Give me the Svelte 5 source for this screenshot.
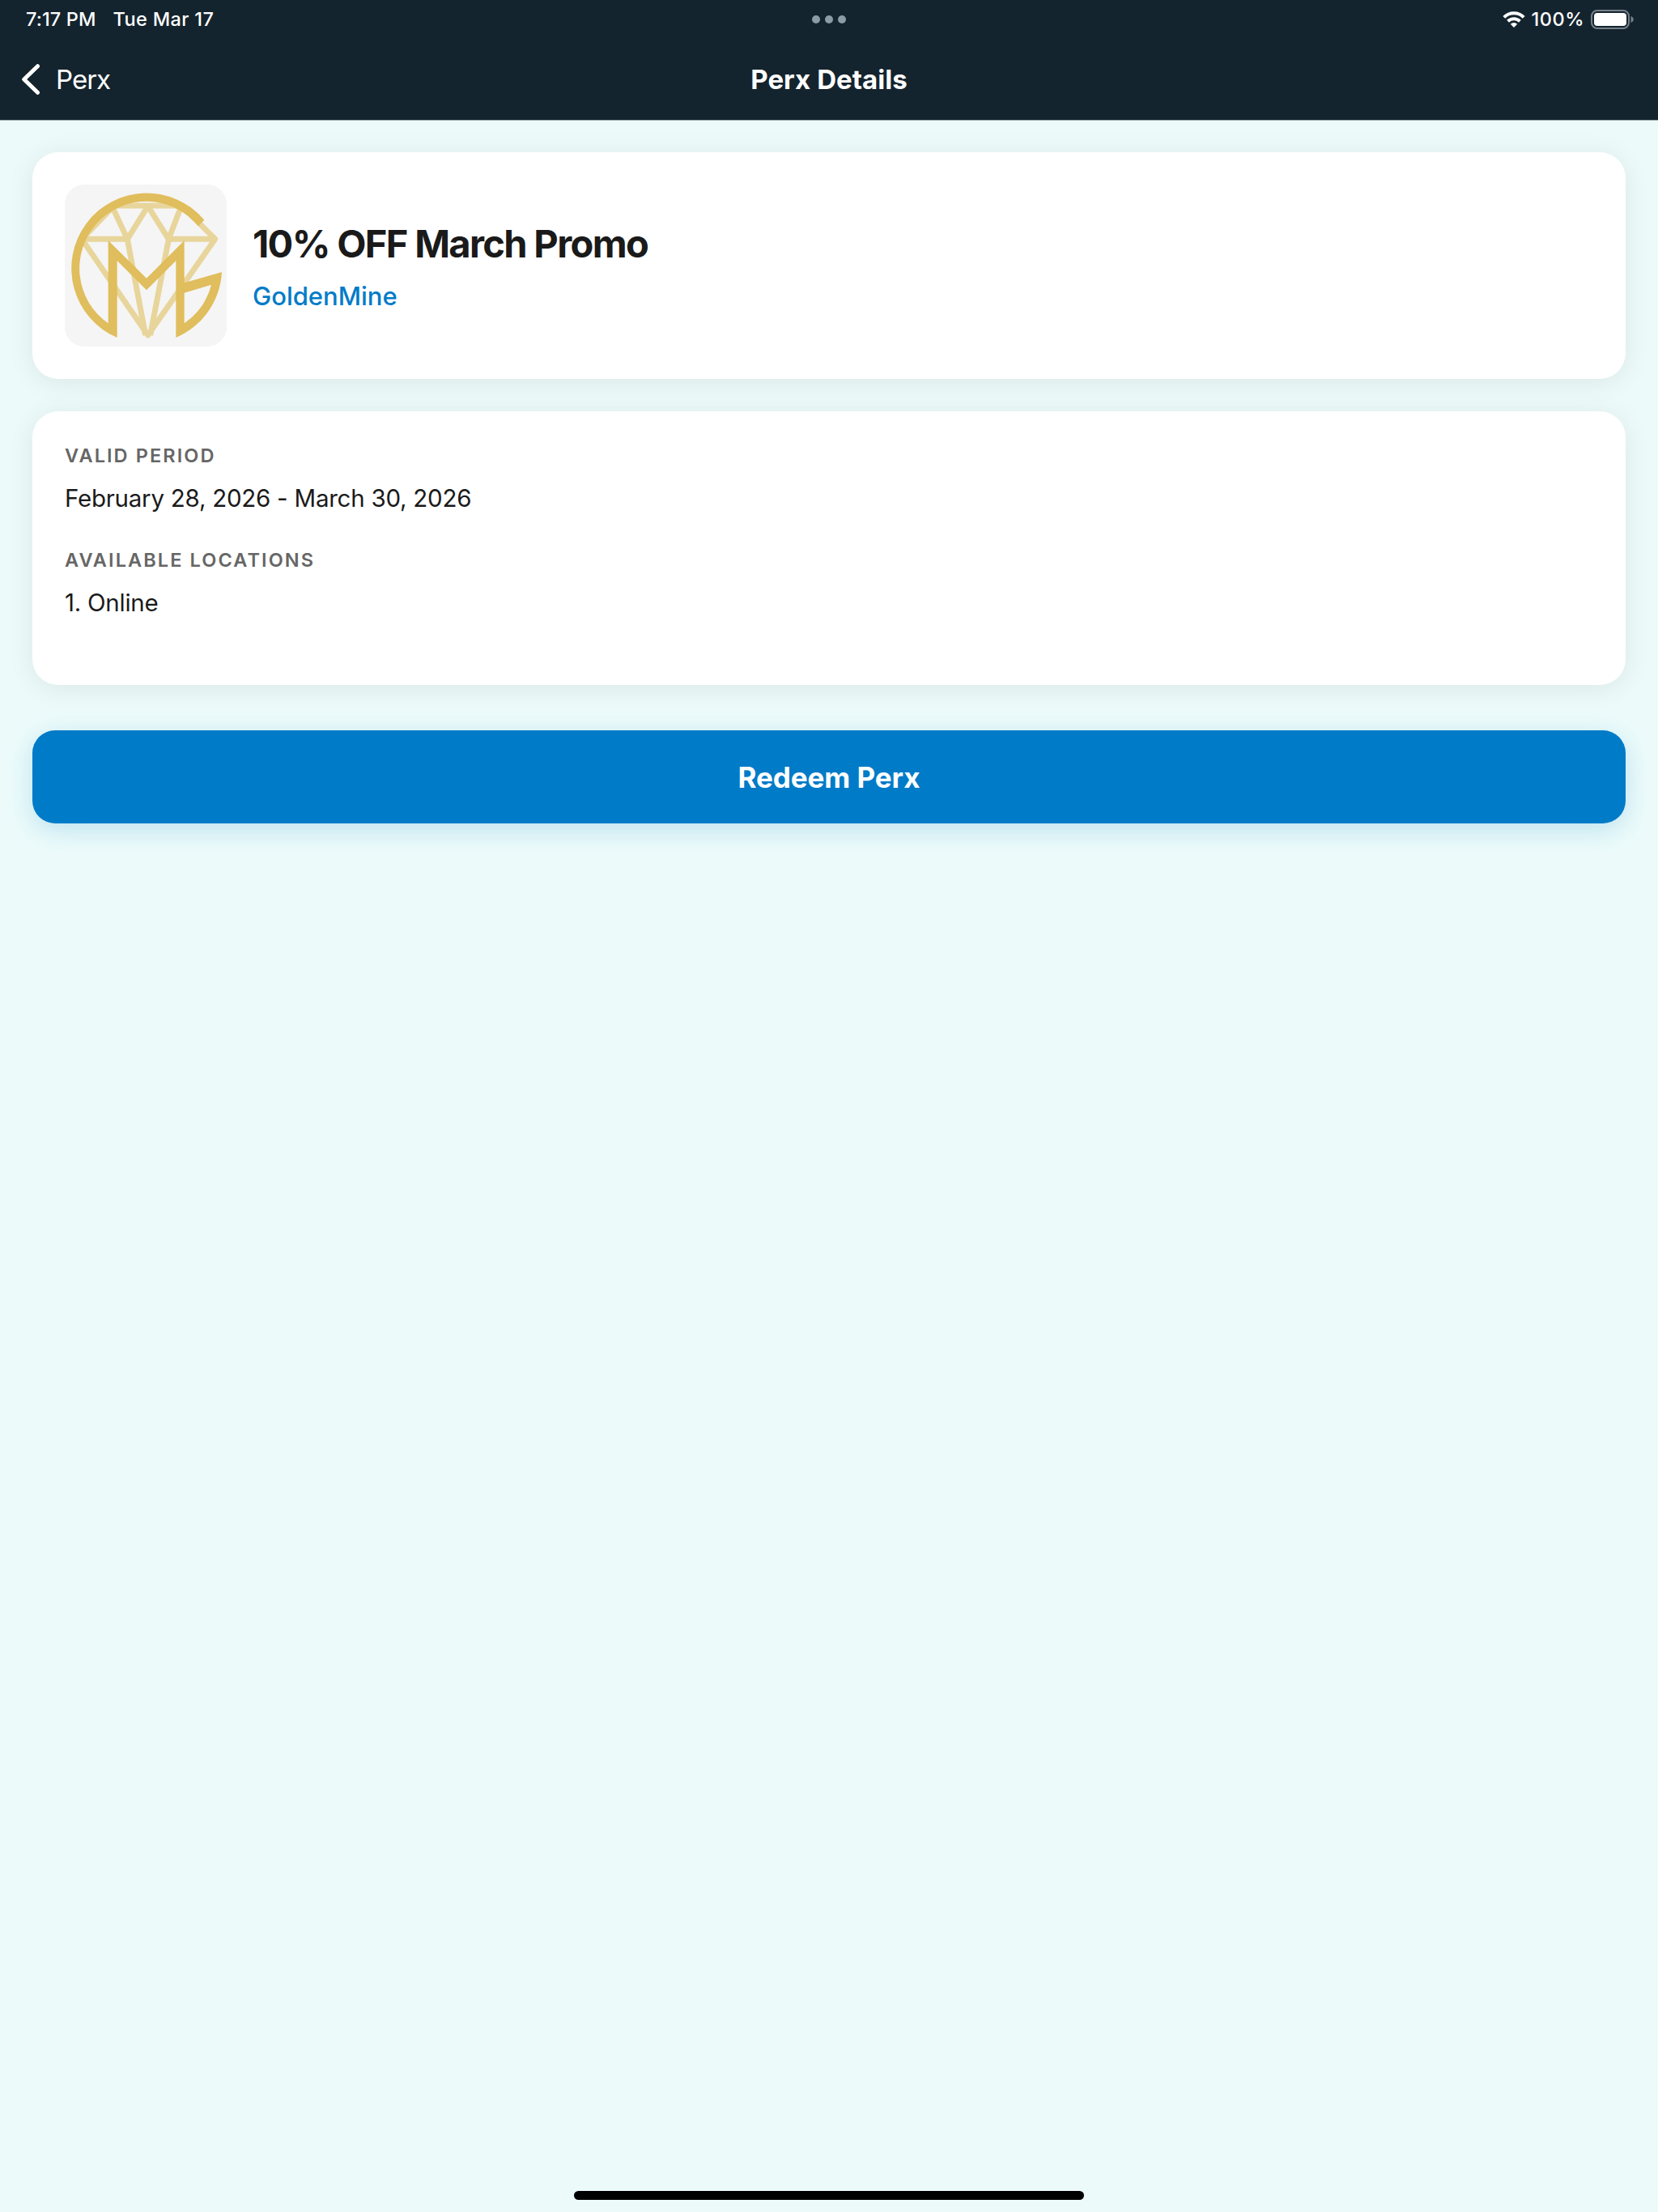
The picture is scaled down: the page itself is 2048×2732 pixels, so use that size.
<script>
  let perk = {
    title: '10% OFF March Promo',
    merchant: 'GoldenMine',
    period: 'February 28, 2026 - March 30, 2026',
    locations: ['Online'],
  };
</script>

<div class="screen">
  <header>
    <div class="status">
      <div class="clock">
        <span class="time">7:17 PM</span>
        <span class="date">Tue Mar 17</span>
      </div>
      <div class="dots"><i></i><i></i><i></i></div>
      <div class="indicators">
        <svg class="wifi" width="28" height="20" viewBox="0 0 28 20">
          <path d="M1.800 7.300A17.300 17.300 0 0 1 26.200 7.300" />
          <path d="M6.600 12.200A10.700 10.700 0 0 1 21.400 12.200" />
          <path class="dot" d="M14 20L9.800 15.700A6.200 6.200 0 0 1 18.200 15.700Z" />
        </svg>
        <span class="percent">100%</span>
        <svg class="battery" width="53" height="24" viewBox="0 0 53 24">
          <rect class="shell" x="1" y="1" width="46" height="22" rx="7" />
          <rect class="level" x="4" y="4" width="40" height="16" rx="4" />
          <path class="cap" d="M49.500 8Q52.800 9.500 52.800 12T49.500 16Z" />
        </svg>
      </div>
    </div>
    <nav>
      <button class="back">
        <svg width="24" height="40" viewBox="0 0 24 40">
          <path d="M20.500 3.700L3.700 20L20.500 36.300" />
        </svg>
        <span>Perx</span>
      </button>
      <h1>Perx Details</h1>
    </nav>
  </header>

  <main>
    <section class="card summary">
      <svg class="logo" viewBox="30 36 600 600">
        <g class="gem">
          <path d="M93 238L213 114H463L587 238L338 594Z" />
          <path d="M93 238H262M415 238H587" />
          <path d="M207 120L262 238L329 594M338 116L262 238M338 116L415 238M460 120L415 238L347 594" />
        </g>
        <path
          class="mark"
          d="M547 167A278.900 278.900 0 1 0 224 603V318L333 427L442 318V603A280 280 0 0 0 612 360L473 400V243L333 383L191 243V550A248 248 0 1 1 525 190ZM473 437L573 407A248 248 0 0 1 473 550Z"
        />
      </svg>
      <div class="info">
        <h2>{perk.title}</h2>
        <p class="merchant">{perk.merchant}</p>
      </div>
    </section>

    <section class="card details">
      <h3>VALID PERIOD</h3>
      <p class="value">{perk.period}</p>
      <h3>AVAILABLE LOCATIONS</h3>
      {#each perk.locations as location, i}
        <p class="value">{i + 1}. {location}</p>
      {/each}
    </section>

    <button class="redeem">Redeem Perx</button>
  </main>

  <div class="home"></div>
</div>

<style>
  :global(body) {
    margin: 0;
    background: #ecfbfa;
  }

  .screen {
    display: flex;
    flex-direction: column;
    width: 2048px;
    height: 2732px;
    overflow: hidden;
    background: #ecfbfa;
    color: #1a1a1a;
    font-family: Inter, 'Liberation Sans', sans-serif;
  }

  h1, h2, h3, p { margin: 0; }

  button {
    border: 0;
    padding: 0;
    background: none;
    color: #fff;
    font-family: inherit;
  }

  header {
    height: 148px;
    background: #14242e;
    border-bottom: 1px solid #9ba8a9;
    color: #fff;
  }

  .status {
    display: grid;
    grid-template-columns: 1fr auto 1fr;
    align-items: center;
    height: 47px;
    padding: 0 30px 0 32px;
    font-size: 23.5px;
    font-weight: 500;
    line-height: 46px;
  }

  .clock { display: flex; gap: 21px; }
  .time { letter-spacing: 0.1px; }
  .date { letter-spacing: 0.37px; }

  .dots {
    display: flex;
    gap: 6px;
    margin-right: 2px;
  }

  .dots i {
    width: 10px;
    height: 10px;
    border-radius: 50%;
    background: #8c9ba5;
  }

  .indicators {
    display: flex;
    align-items: center;
    justify-content: flex-end;
  }

  .wifi {
    margin-right: 8px;
    fill: none;
    stroke: #fff;
    stroke-width: 4;
  }

  .wifi .dot { fill: #fff; stroke: none; }
  .percent { margin-right: 8px; letter-spacing: 0.5px; }
  .shell { fill: none; stroke: #75808a; stroke-width: 2; }
  .level { fill: #fff; }
  .cap { fill: #75808a; }

  nav {
    display: grid;
    grid-template-columns: 1fr auto 1fr;
    align-items: center;
    height: 102px;
    padding: 0 26px;
  }

  .back {
    display: flex;
    align-items: center;
    gap: 19px;
    font-size: 33px;
    letter-spacing: -1px;
    line-height: 40px;
  }

  .back path {
    fill: none;
    stroke: #fff;
    stroke-width: 5;
    stroke-linecap: round;
    stroke-linejoin: round;
  }

  h1 {
    font-size: 33px;
    font-weight: 700;
    letter-spacing: 0.05px;
    line-height: 40px;
  }

  main {
    display: flex;
    flex: 1;
    flex-direction: column;
    padding: 39px 40px 0;
  }

  .card {
    padding: 40px;
    margin-bottom: 40px;
    border-radius: 32px;
    background: #fff;
    box-shadow: 0 4px 32px rgba(0, 0, 0, 0.08);
  }

  .summary {
    display: flex;
    align-items: center;
    gap: 32px;
  }

  .logo {
    width: 200px;
    height: 200px;
    border-radius: 24px;
    background: #f5f5f5;
  }

  .gem {
    fill: none;
    stroke: #e8d59b;
    stroke-width: 21;
    stroke-linejoin: round;
  }

  .mark { fill: #e0bd5d; }

  h2 {
    margin-bottom: 15px;
    font-size: 47px;
    font-weight: 700;
    letter-spacing: -1.65px;
    line-height: 60px;
  }

  .merchant {
    color: #007bc8;
    font-size: 31px;
    font-weight: 500;
    line-height: 40px;
  }

  h3 {
    margin-bottom: 16px;
    color: #666;
    font-size: 23.5px;
    font-weight: 600;
    letter-spacing: 2.1px;
    line-height: 29px;
  }

  .value {
    margin-bottom: 40px;
    font-size: 29.5px;
    letter-spacing: -0.25px;
    line-height: 44px;
  }

  .redeem {
    height: 115px;
    margin-top: 16px;
    border-radius: 28px;
    background: #007bc8;
    box-shadow: 0 8px 32px rgba(0, 123, 200, 0.2);
    font-size: 35px;
    font-weight: 700;
    letter-spacing: -0.05px;
    line-height: 44px;
  }

  .home {
    align-self: center;
    width: 630px;
    height: 11px;
    margin-bottom: 15px;
    border-radius: 6px;
    background: #000;
  }
</style>
